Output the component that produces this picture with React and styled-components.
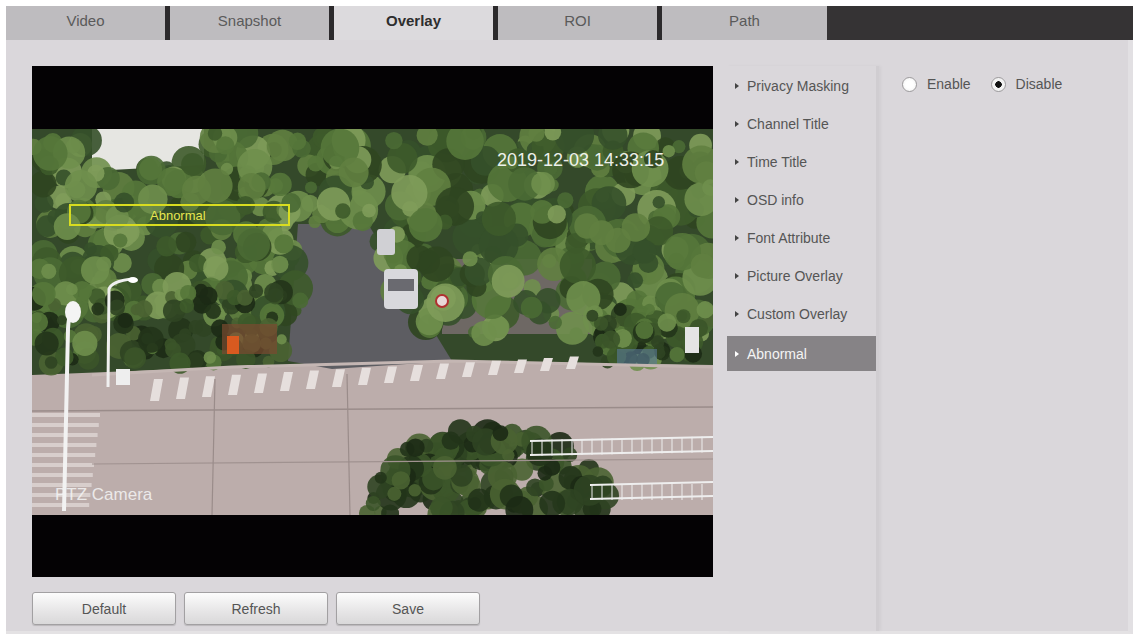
import React from 'react';
import styled, { createGlobalStyle } from 'styled-components';

const GlobalStyle = createGlobalStyle`
  body {
    margin: 0;
    background: #ffffff;
    font-family: "Liberation Sans", Arial, sans-serif;
  }
`;

const tabs = ['Video', 'Snapshot', 'Overlay', 'ROI', 'Path'];
const menu = [
  'Privacy Masking',
  'Channel Title',
  'Time Title',
  'OSD info',
  'Font Attribute',
  'Picture Overlay',
  'Custom Overlay',
  'Abnormal',
];

// small seeded random so the tree blobs look the same every render
const makeRand = (seed) => () => {
  seed = (seed * 16807) % 2147483647;
  return (seed - 1) / 2147483646;
};

const greens = ['#3d5a2a', '#55773a', '#6f8f4c', '#7f9c5a', '#2f4520', '#4a6a34', '#617f40', '#35502a'];
const darkGreens = ['#22341a', '#2f4422', '#3b5429', '#4a6332', '#1c2a15'];

const buildBlobs = () => {
  const rand = makeRand(4711);
  const blobs = [];
  const add = (n, x0, x1, y0, y1, r0, r1, palette, skip) => {
    for (let i = 0; i < n; i += 1) {
      const cx = x0 + rand() * (x1 - x0);
      const cy = y0 + rand() * (y1 - y0);
      if (skip && skip(cx, cy)) continue;
      blobs.push({
        cx,
        cy,
        r: r0 + rand() * (r1 - r0),
        fill: palette[Math.floor(rand() * palette.length)],
      });
    }
  };
  const inSky = (x, y) => x > 62 && x < 168 && y < 34;
  const inRoad = (x, y) => y > 95 && x > 266 + (y - 95) * 0.05 && x < 336 + (y - 95) * 0.35;
  add(260, 0, 310, 0, 185, 6, 18, greens, (x, y) => inSky(x, y) || inRoad(x, y));
  add(300, 300, 681, 0, 205, 6, 20, greens, inRoad);
  add(110, 0, 250, 160, 235, 5, 13, darkGreens.concat(greens.slice(0, 3)));
  add(70, 560, 681, 180, 235, 5, 12, darkGreens.concat(greens.slice(0, 3)));
  add(220, 320, 580, 290, 386, 6, 16, darkGreens, (x, y) => {
    const dx = (x - 455) / 125;
    const dy = (y - 392) / 95;
    return dx * dx + dy * dy > 1;
  });
  return blobs;
};

const blobs = buildBlobs();

const Scene = () => (
  <svg width="681" height="386" viewBox="0 0 681 386" style={{ display: 'block' }}>
    <rect width="681" height="386" fill="#bcadab" />
    {/* foliage base */}
    <polygon points="0,0 681,0 681,236 420,232 200,238 0,246" fill="#34492a" />
    <polygon points="60,0 172,0 172,36 60,42" fill="#e6e6e2" />
    {/* far road / asphalt */}
    <polygon points="266,95 336,95 420,232 300,240 256,232" fill="#5d5d62" />
    {/* building right of road */}
    <rect x="410" y="130" width="150" height="75" fill="#6e6864" />
    {blobs.map((b, i) => (
      <circle key={i} cx={b.cx} cy={b.cy} r={b.r} fill={b.fill} opacity="0.9" />
    ))}
    {/* cars */}
    <rect x="345" y="100" width="18" height="26" rx="3" fill="#d0d0d4" />
    <rect x="352" y="140" width="34" height="40" rx="4" fill="#d8d8dc" />
    <rect x="356" y="150" width="26" height="12" fill="#6a6a70" />
    <circle cx="410" cy="172" r="6" fill="#e8d8d8" stroke="#b03030" strokeWidth="2" />
    {/* bikes */}
    <rect x="190" y="195" width="55" height="30" fill="#7a4a30" opacity="0.7" />
    <rect x="195" y="207" width="12" height="18" fill="#d85a20" />
    <rect x="585" y="220" width="40" height="16" fill="#5a7a9a" opacity="0.6" />
    <rect x="653" y="198" width="14" height="26" fill="#e4e4e4" />
    {/* pavement edge */}
    <path d="M60 246 L200 238 L420 232 L681 238" stroke="#c4b6b3" strokeWidth="3" fill="none" />
    {/* crosswalk */}
    {Array.from({ length: 17 }).map((_, i) => {
      const x = 118 + i * 26;
      const top = 250 - i * 1.4;
      const h = 22 - i * 0.6;
      return (
        <polygon
          key={i}
          points={`${x},${top + h} ${x + 9},${top + h} ${x + 13},${top} ${x + 4},${top}`}
          fill="#e6dfdd"
        />
      );
    })}
    {/* left crosswalk */}
    {Array.from({ length: 10 }).map((_, i) => (
      <rect key={i} x="0" y={284 + i * 10} width={68 - i * 1.2} height="4" fill="#d8cecc" />
    ))}
    {/* road cracks */}
    <path d="M0 282 L681 278" stroke="#9a8c8a" strokeWidth="1.5" fill="none" />
    <path d="M60 335 L681 330" stroke="#a09290" strokeWidth="1.2" fill="none" />
    <path d="M183 250 L180 386" stroke="#9a8c8a" strokeWidth="1.2" fill="none" />
    <path d="M315 245 L318 386" stroke="#9a8c8a" strokeWidth="1.2" fill="none" />
    {/* fences */}
    <g stroke="#eeeeee" strokeWidth="2" fill="none">
      <path d="M498 312 L681 308 M498 326 L681 322" />
      <path d="M558 356 L681 353 M558 370 L681 367" />
      {Array.from({ length: 18 }).map((_, i) => (
        <path key={i} d={`M${500 + i * 10} ${311 - i * 0.2} L${500 + i * 10} ${327 - i * 0.2}`} strokeWidth="1" />
      ))}
      {Array.from({ length: 12 }).map((_, i) => (
        <path key={`b${i}`} d={`M${560 + i * 10} ${355} L${560 + i * 10} ${371}`} strokeWidth="1" />
      ))}
    </g>
    {/* street lights */}
    <path d="M32 382 L36 200 Q37 184 40 182" stroke="#f2f2f2" strokeWidth="4" fill="none" />
    <ellipse cx="41" cy="183" rx="8" ry="11" fill="#f4f4f4" />
    <path d="M76 258 L77 160 Q80 152 100 150" stroke="#f0f0f0" strokeWidth="3" fill="none" />
    <ellipse cx="101" cy="151" rx="5" ry="3" fill="#ffffff" />
    <rect x="84" y="240" width="14" height="16" fill="#eeeeee" />
    {/* osd */}
    <text x="465" y="37" fill="#ffffff" fontSize="18" fontFamily="Liberation Sans, Arial, sans-serif" opacity="0.9">
      2019-12-03 14:33:15
    </text>
    <text x="23" y="371" fill="#f4f4f4" fontSize="17" fontFamily="Liberation Sans, Arial, sans-serif" opacity="0.85">
      PTZ Camera
    </text>
    <rect x="38" y="76" width="219" height="20" fill="none" stroke="#d8dc20" strokeWidth="2" />
    <text x="118" y="91" fill="#e6e650" fontSize="13" fontFamily="Liberation Sans, Arial, sans-serif">
      Abnormal
    </text>
  </svg>
);

const App = () => (
  <>
    <GlobalStyle />
    <Page>
      <TabBar>
        {tabs.map((t) => (
          <Tab key={t} $active={t === 'Overlay'}>{t}</Tab>
        ))}
        <TabFill />
      </TabBar>
      <Panel>
        <Main>
          <Video>
            <Scene />
          </Video>
          <ButtonRow>
            <Button type="button">Default</Button>
            <Button type="button">Refresh</Button>
            <Button type="button">Save</Button>
          </ButtonRow>
        </Main>
        <Menu>
          {menu.map((m) => (
            <MenuItem key={m} $active={m === 'Abnormal'}>
              <Arrow $active={m === 'Abnormal'} />
              {m}
            </MenuItem>
          ))}
        </Menu>
        <Settings>
          <RadioLabel>
            <Radio />
            Enable
          </RadioLabel>
          <RadioLabel>
            <Radio $checked />
            Disable
          </RadioLabel>
        </Settings>
      </Panel>
    </Page>
  </>
);

const Page = styled.div`
  padding: 6px 4px 0 6px;
  width: 1127px;
`;

const TabBar = styled.div`
  display: flex;
  height: 34px;
`;

const Tab = styled.div`
  width: 164px;
  display: flex;
  align-items: center;
  justify-content: center;
  padding-bottom: 6px;
  box-sizing: border-box;
  font-size: 15px;
  color: ${(p) => (p.$active ? '#2e2e2e' : '#5a5a5a')};
  font-weight: ${(p) => (p.$active ? 'bold' : 'normal')};
  background: ${(p) => (p.$active ? '#dcdadd' : '#bebcbf')};
  border-right: 5px solid #2c2a2c;
  &:nth-child(5) {
    border-right: none;
    width: 165px;
  }
`;

const TabFill = styled.div`
  flex: 1;
  background: #353334;
`;

const Panel = styled.div`
  display: flex;
  height: 594px;
  background: #dad7db;
  padding: 26px 0 0 26px;
  box-sizing: border-box;
  border-right: 5px solid #e2e0e3;
  border-bottom: 3px solid #e4e2e4;
`;

const Main = styled.div`
  display: flex;
  flex-direction: column;
`;

const Video = styled.div`
  width: 681px;
  height: 511px;
  background: #040204;
  display: flex;
  align-items: center;
`;

const ButtonRow = styled.div`
  display: flex;
  gap: 8px;
  margin-top: 15px;
`;

const Button = styled.button`
  width: 144px;
  height: 33px;
  border: 1px solid #a2a0a2;
  border-radius: 3px;
  background: linear-gradient(#fcfcfc, #e6e5e6 60%, #d9d8d9);
  box-shadow: 0 1px 1px rgba(0, 0, 0, 0.15);
  font-family: "Liberation Sans", Arial, sans-serif;
  font-size: 14px;
  color: #555555;
`;

const Menu = styled.div`
  margin-left: 14px;
  width: 149px;
  padding-top: 1px;
  border-right: 3px solid #d0cdd1;
  box-shadow: 2px 0 3px rgba(0, 0, 0, 0.04);
`;

const MenuItem = styled.div`
  height: 38px;
  display: flex;
  align-items: center;
  gap: 8px;
  padding-left: 8px;
  box-sizing: border-box;
  font-size: 14px;
  color: ${(p) => (p.$active ? '#f4f4f4' : '#555555')};
  background: ${(p) => (p.$active ? '#868386' : 'transparent')};
  ${(p) => p.$active && 'height: 35px; margin-top: 3px;'}
`;

const Arrow = styled.span`
  width: 0;
  height: 0;
  border-top: 3px solid transparent;
  border-bottom: 3px solid transparent;
  border-left: 4px solid ${(p) => (p.$active ? '#ffffff' : '#444444')};
`;

const Settings = styled.div`
  display: flex;
  align-items: flex-start;
  gap: 20px;
  padding: 10px 0 0 23px;
`;

const RadioLabel = styled.label`
  display: flex;
  align-items: center;
  gap: 10px;
  font-size: 14px;
  color: #555555;
`;

const Radio = styled.span`
  width: 13px;
  height: 13px;
  border-radius: 50%;
  border: 1px solid #9c9a9c;
  background: ${(p) =>
    p.$checked
      ? 'radial-gradient(circle, #111 0 3px, #f2f2f2 3.5px)'
      : 'radial-gradient(circle, #ffffff 40%, #eeeeee)'};
`;

export default App;
